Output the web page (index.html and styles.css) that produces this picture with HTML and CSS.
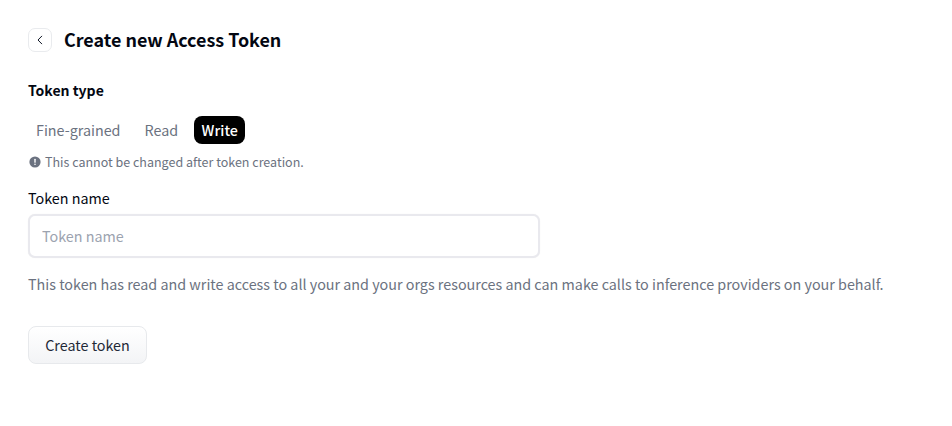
FILE: index.html
```html
<!DOCTYPE html>
<html lang="en">
<head>
<meta charset="utf-8">
<title>Create new Access Token</title>
<link rel="stylesheet" href="styles.css">
</head>
<body>
<main class="page">
  <header class="head">
    <a class="back" href="#" aria-label="Back">
      <svg width="14" height="14" viewBox="0 0 14 14" fill="none"><path d="M9 2.9 5 7l4 4.1" stroke="#111827" stroke-width="1"/></svg>
    </a>
    <h1 class="title">Create new Access Token</h1>
  </header>
  <h2 class="section">Token type</h2>
  <div class="tabs">
    <span class="tab">Fine-grained</span>
    <span class="tab">Read</span>
    <span class="tab active">Write</span>
  </div>
  <p class="note">
    <svg class="note-icon" width="12" height="12" viewBox="0 0 12 12"><circle cx="6" cy="6" r="5.6" fill="#6b7280"/><rect x="5.3" y="2.8" width="1.4" height="3.9" rx=".5" fill="#fff"/><rect x="5.3" y="7.6" width="1.4" height="1.4" rx=".6" fill="#fff"/></svg>
    This cannot be changed after token creation.
  </p>
  <label class="label" for="name">Token name</label>
  <input class="input" id="name" type="text" placeholder="Token name">
  <p class="desc">This token has read and write access to all your and your orgs resources and can make calls to inference providers on your behalf.</p>
  <button class="btn" type="button">Create token</button>
</main>
</body>
</html>
```
FILE: styles.css
```css
* { box-sizing: border-box; }
html, body { margin: 0; background: #fff; }
body {
  font-family: "Noto Sans CJK SC", "Noto Sans CJK JP", "Noto Sans", sans-serif;
  color: #000;
  font-size: 14.33px;
  line-height: 24px;
}
.page { padding: 28px 28px 0; display: flex; flex-direction: column; align-items: flex-start; }
.head { display: flex; align-items: center; gap: 12px; height: 24px; }
.back {
  width: 24px; height: 24px;
  display: flex; align-items: center; justify-content: center;
  border: 1px solid #e9ebee; border-radius: 7px;
  background: #fff;
}
.title { margin: -2px 0 0; font-size: 17.92px; line-height: 24px; font-weight: 700; color: #030712; }
.section { margin: 26px 0 0; font-size: 14px; line-height: 24px; font-weight: 600; color: #030712; }
.tabs { display: flex; gap: 8px; margin-top: 14px; }
.tab { padding: 0 8px; height: 28px; line-height: 28px; border-radius: 8px; color: #6b7280; }
.tab.active { background: #000; color: #fff; font-weight: 500; padding: 0 7.5px; }
.note { margin: 8px 0 0; display: flex; align-items: center; gap: 4px; font-size: 12.5px; line-height: 20px; color: #6b7280; padding-left: 1px; }
.label { margin-top: 14px; line-height: 24px; color: #030712; }
.input {
  margin-top: 4px;
  width: 512px; height: 44px;
  padding: 0 12px 2px;
  border: 2px solid #e9e9ee; border-radius: 7px;
  font: inherit; color: #030712;
  background: #fff; outline: none;
  box-shadow: 0 0 1px rgba(0,0,0,.08);
}
.input::placeholder { color: #9ca3af; opacity: 1; }
.desc { margin: 14px 0 0; line-height: 24px; color: #6b7280; white-space: nowrap; }
.btn {
  margin-top: 30px;
  width: 119px; height: 38px;
  border: 1px solid #e7e9ec; border-radius: 8px;
  background: linear-gradient(#fff, #f3f4f6);
  font: inherit; line-height: 24px; color: #1f2937;
  padding: 0;
}
```
